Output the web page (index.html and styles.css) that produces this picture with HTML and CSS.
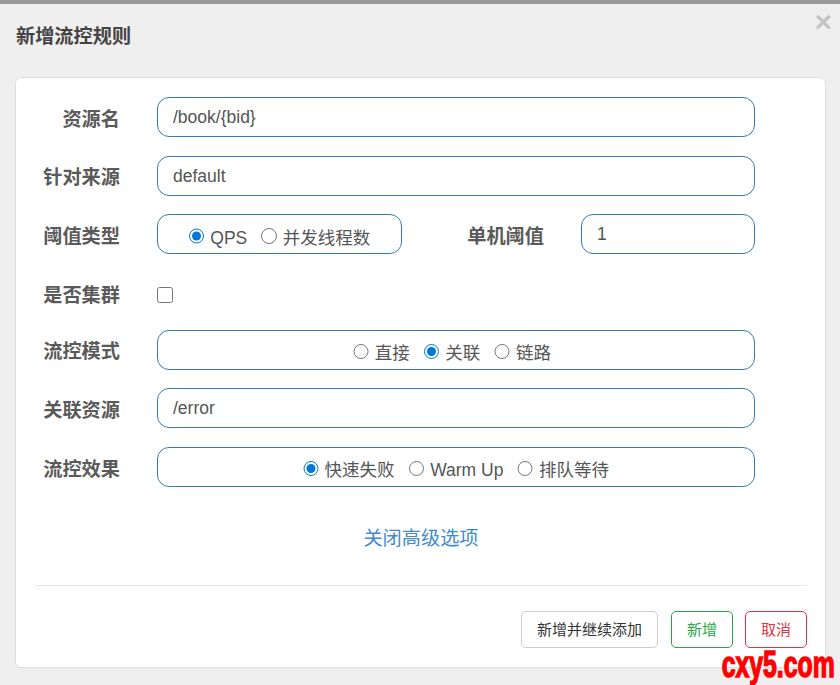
FILE: index.html
```html
<!DOCTYPE html>
<html lang="zh-CN">
<head>
<meta charset="utf-8">
<title>新增流控规则</title>
<link rel="stylesheet" href="styles.css">
</head>
<body>
<div class="dialog">
  <header class="dialog-head">
    <h4 class="dialog-title">新增流控规则</h4>
    <span class="close">×</span>
  </header>
  <main class="card">
    <form class="form">
      <div class="row">
        <label class="label">资源名</label>
        <input class="field" type="text" value="/book/{bid}">
      </div>
      <div class="row">
        <label class="label label-up">针对来源</label>
        <input class="field" type="text" value="default">
      </div>
      <div class="row">
        <label class="label">阈值类型</label>
        <div class="box box-type">
          <label class="opt"><input type="radio" name="grade" checked>QPS</label>
          <label class="opt"><input type="radio" name="grade">并发线程数</label>
        </div>
        <label class="label label-single">单机阈值</label>
        <input class="field field-count" type="text" value="1">
      </div>
      <div class="row">
        <label class="label label-down">是否集群</label>
        <input class="check" type="checkbox">
      </div>
      <div class="row">
        <label class="label label-up">流控模式</label>
        <div class="box box-shift">
          <label class="opt"><input type="radio" name="mode">直接</label>
          <label class="opt"><input type="radio" name="mode" checked>关联</label>
          <label class="opt"><input type="radio" name="mode">链路</label>
        </div>
      </div>
      <div class="row">
        <label class="label">关联资源</label>
        <input class="field" type="text" value="/error">
      </div>
      <div class="row">
        <label class="label">流控效果</label>
        <div class="box">
          <label class="opt"><input type="radio" name="effect" checked>快速失败</label>
          <label class="opt"><input type="radio" name="effect">Warm Up</label>
          <label class="opt"><input type="radio" name="effect">排队等待</label>
        </div>
      </div>
    </form>
    <div class="toggle"><a class="link">关闭高级选项</a></div>
    <footer class="foot">
      <button class="btn" type="button">新增并继续添加</button>
      <button class="btn btn-ok" type="button">新增</button>
      <button class="btn btn-cancel" type="button">取消</button>
    </footer>
  </main>
</div>
<div class="watermark">cxy5.com</div>
</body>
</html>
```

FILE: styles.css
```css
* { box-sizing: border-box; }
html, body { margin: 0; height: 100%; }
body {
  width: 840px;
  height: 685px;
  overflow: hidden;
  background: #efefef;
  color: #555555;
  font-family: "Liberation Sans", "Noto Sans CJK SC", sans-serif;
  position: relative;
}
.dialog {
  border-top: 4px solid #999999;
  padding: 0 14px 0 15px;
}
.dialog-head {
  height: 73px;
  position: relative;
}
.dialog-title {
  margin: 0;
  padding: 20px 0 0 1px;
  font-size: 19.2px;
  line-height: 26px;
  font-weight: 700;
  color: #444444;
}
.close {
  position: absolute;
  right: -6px;
  top: 2px;
  font-size: 30px;
  line-height: 32px;
  font-weight: 700;
  color: #c4c4c4;
}
.card {
  height: 591px;
  background: #ffffff;
  border: 1px solid #dddddd;
  border-radius: 6px;
  padding: 19px 18px 18px 19px;
}
.form {
  display: grid;
  grid-template-rows: 59px 58px 58px 58px 58px 59px 40px;
}
.row {
  display: flex;
  align-items: flex-start;
}
.label {
  width: 85px;
  margin-right: 37px;
  text-align: right;
  font-size: 19.2px;
  line-height: 40px;
  font-weight: 700;
  color: #5a5a5a;
  white-space: nowrap;
  padding-top: 3px;
}
.label-up { padding-top: 2px; }
.label-down { padding-top: 4px; }
.field {
  width: 598px;
  height: 40px;
  border: 1px solid #337ab7;
  border-radius: 12px;
  padding: 0 15px 0 15px;
  background: #ffffff;
  color: #555555;
  font: 17.5px "Liberation Sans", "Noto Sans CJK SC", sans-serif;
  outline: none;
}
.field-count {
  width: 174px;
}
.box {
  width: 598px;
  height: 40px;
  border: 1px solid #337ab7;
  border-radius: 12px;
  display: flex;
  justify-content: center;
  align-items: center;
  gap: 14px;
  padding-top: 6px;
}
.box-type { width: 245px; padding-top: 7px; }
.box-shift { padding-right: 8px; }
.label-single {
  width: 77px;
  margin: 0 37px 0 65px;
}
.opt {
  display: flex;
  align-items: center;
  font-size: 17.5px;
  line-height: 24px;
  color: #555555;
  white-space: nowrap;
}
.opt input {
  width: 15.6px;
  height: 15.6px;
  margin: -3px 6px 0 0;
  accent-color: #0078d7;
}
.check {
  width: 15.6px;
  height: 15.6px;
  margin: 15px 0 0 0;
  accent-color: #0078d7;
}
.toggle {
  margin-top: 38px;
  text-align: center;
  height: 28px;
  line-height: 28px;
}
.link {
  font-size: 19.2px;
  color: #428bca;
}
.foot {
  margin-top: 32px;
  border-top: 1px solid #e5e5e5;
  padding-top: 25px;
  display: flex;
  justify-content: flex-end;
  gap: 12px;
}
.btn {
  height: 37px;
  width: 62px;
  padding: 0 0 3px;
  background: #ffffff;
  border: 1px solid #cccccc;
  border-radius: 5px;
  font: 15px "Liberation Sans", "Noto Sans CJK SC", sans-serif;
  color: #333333;
}
.btn:first-child { width: 137px; margin-right: 1px; }
.btn-ok { border-color: #28a745; color: #28a745; }
.btn-cancel { border-color: #dc3545; color: #dc3545; }
.watermark {
  position: absolute;
  right: 5px;
  bottom: 0;
  font-family: "Liberation Sans", sans-serif;
  font-size: 37px;
  line-height: 40px;
  font-weight: 700;
  color: #ff0000;
  -webkit-text-stroke: 1.5px #ff0000;
  transform: scaleX(0.67);
  transform-origin: right center;
}
```
